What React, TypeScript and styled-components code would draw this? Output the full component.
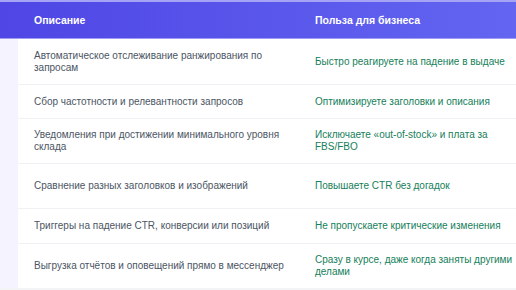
import styled, { createGlobalStyle } from 'styled-components'

const GlobalStyle = createGlobalStyle`
  html, body {
    margin: 0;
    padding: 0;
    background: #f3f4f6;
  }
  body {
    font-family: 'Liberation Sans', Arial, sans-serif;
  }
`

const Page = styled.div`
  width: 516px;
  height: 290px;
  overflow: hidden;
  background: #f3f4f6;
`

const Table = styled.div`
  display: flex;
  flex-direction: column;
  width: 524px;
  background: #f5f3ff;
`

const HeaderRow = styled.div`
  display: grid;
  grid-template-columns: 299px 1fr;
  height: 36px;
  align-items: center;
  background: linear-gradient(90deg, #4f46e5 0%, #6366f1 100%);
  border-top: 2px solid #a5a3f5;
  border-bottom: 1px solid #9f9cf3;
  color: #ffffff;
  font-size: 10.5px;
  font-weight: 700;
`

const HeadCell = styled.div<{ $pad: number }>`
  padding-left: ${({ $pad }) => $pad}px;
`

const Body = styled.div`
  margin-left: 18px;
  background: #ffffff;
`

const Row = styled.div<{ $h: number }>`
  display: grid;
  grid-template-columns: 281px 1fr;
  align-items: center;
  height: ${({ $h }) => $h}px;
  border-bottom: 1px solid #f0f1f5;
  box-sizing: border-box;

  &:last-child {
    border-bottom: none;
  }
`

const Cell = styled.div<{ $benefit?: boolean }>`
  padding: 0 ${({ $benefit }) => ($benefit ? 0 : 10)}px 0 16px;
  font-size: 10px;
  line-height: 12px;
  color: ${({ $benefit }) => ($benefit ? '#15805a' : '#4b5563')};
`

const rows = [
  { h: 46, what: 'Автоматическое отслеживание ранжирования по запросам', why: 'Быстро реагируете на падение в выдаче' },
  { h: 34, what: 'Сбор частотности и релевантности запросов', why: 'Оптимизируете заголовки и описания' },
  { h: 45, what: 'Уведомления при достижении минимального уровня склада', why: 'Исключаете «out-of-stock» и плата за FBS/FBO' },
  { h: 45, what: 'Сравнение разных заголовков и изображений', why: 'Повышаете CTR без догадок' },
  { h: 35, what: 'Триггеры на падение CTR, конверсии или позиций', why: 'Не пропускаете критические изменения' },
  { h: 44, what: 'Выгрузка отчётов и оповещений прямо в мессенджер', why: 'Сразу в курсе, даже когда заняты другими делами' },
]

export default function App() {
  return (
    <Page>
      <GlobalStyle />
      <Table>
        <HeaderRow>
          <HeadCell $pad={34}>Описание</HeadCell>
          <HeadCell $pad={16}>Польза для бизнеса</HeadCell>
        </HeaderRow>
        <Body>
          {rows.map((r) => (
            <Row key={r.what} $h={r.h}>
              <Cell>{r.what}</Cell>
              <Cell $benefit>{r.why}</Cell>
            </Row>
          ))}
        </Body>
      </Table>
    </Page>
  )
}
